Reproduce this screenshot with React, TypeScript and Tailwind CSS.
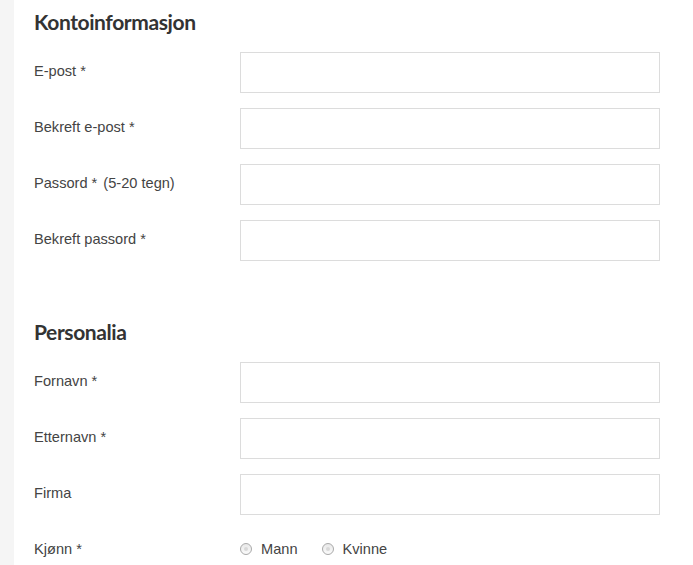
import React from 'react';

const sections = [
  {
    title: 'Kontoinformasjon',
    fields: [
      { label: 'E-post *' },
      { label: 'Bekreft e-post *' },
      { label: 'Passord *', hint: '(5-20 tegn)' },
      { label: 'Bekreft passord *' },
    ],
  },
  {
    title: 'Personalia',
    fields: [{ label: 'Fornavn *' }, { label: 'Etternavn *' }, { label: 'Firma' }],
  },
];

function Radio({ label }: { label: string }) {
  return (
    <label className="flex items-center mr-[24px]">
      <span className="w-[12px] h-[12px] rounded-full border border-[#a9a9a9] bg-gradient-to-b from-[#e8e8e8] to-[#fbfbfb] flex items-center justify-center">
        <span className="w-[4px] h-[4px] rounded-full bg-[#d8d8d8]"></span>
      </span>
      <span className="ml-[9px]">{label}</span>
    </label>
  );
}

export default function App() {
  return (
    <div className="w-[693px] h-[565px] overflow-hidden flex bg-white font-['Liberation_Sans',Arial,sans-serif] text-[14.6px] text-[#444]">
      {/* grey gutter */}
      <div className="w-[14px] shrink-0 bg-[#f5f5f5]"></div>

      <div className="flex-1 pl-[20px] pr-[33px]">
        {sections.map((s, si) => (
          <div key={s.title} className={si === 0 ? 'pt-[9px]' : 'pt-[43px]'}>
            <h2 className="font-['Lato',sans-serif] font-bold text-[21px] leading-[26px] text-[#333] tracking-[-0.4px] mb-[17px]">
              {s.title}
            </h2>
            {s.fields.map((f) => (
              <div key={f.label} className="flex items-center h-[41px] mb-[15px]">
                <div className="w-[206px] shrink-0 -mt-[2px]">
                  {f.label}
                  {f.hint && <span className="ml-[2px]"> {f.hint}</span>}
                </div>
                <input type="text" className="flex-1 h-[41px] border border-[#dcdcdc] outline-none px-2" />
              </div>
            ))}
            {si === 1 && (
              <div className="flex items-center h-[41px]">
                <div className="w-[206px] shrink-0 -mt-[2px]">Kjønn *</div>
                <div className="flex items-center -mt-[2px]">
                  <Radio label="Mann" />
                  <Radio label="Kvinne" />
                </div>
              </div>
            )}
          </div>
        ))}
      </div>
    </div>
  );
}
